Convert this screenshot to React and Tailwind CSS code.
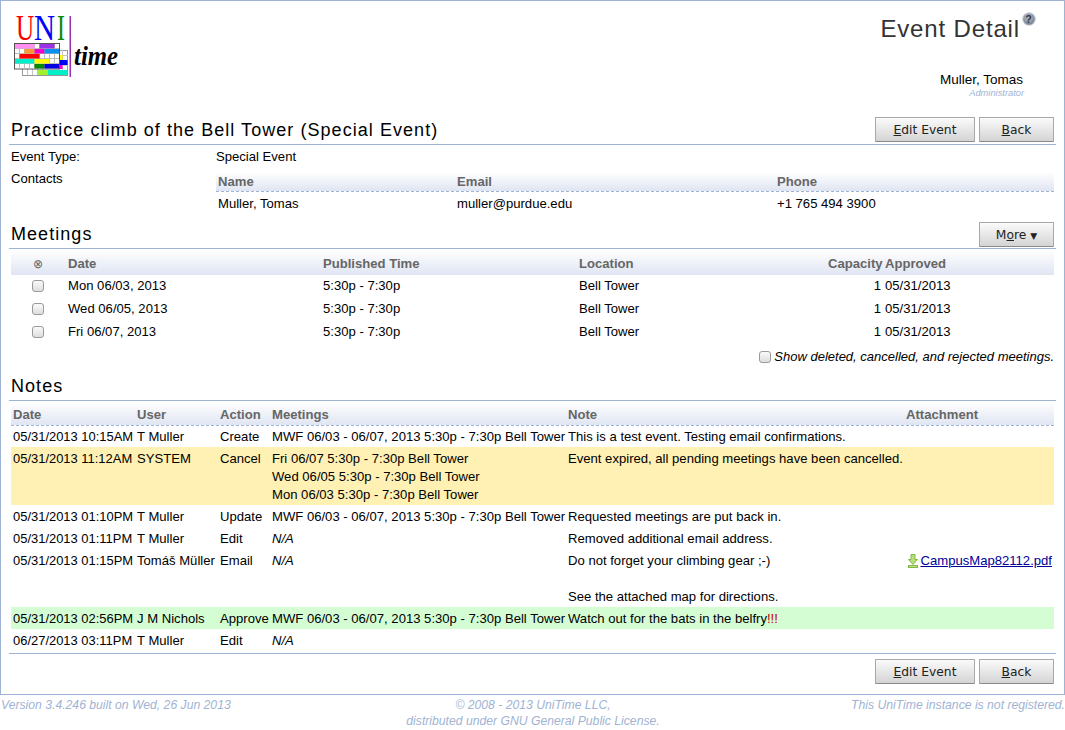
const meetings = [
  { date: 'Mon 06/03, 2013' },
  { date: 'Wed 06/05, 2013' },
  { date: 'Fri 06/07, 2013' },
];

const mwf = 'MWF 06/03 - 06/07, 2013 5:30p - 7:30p Bell Tower';

const notes = [
  { date: '05/31/2013 10:15AM', user: 'T Muller', action: 'Create', meetings: [mwf], note: ['This is a test event. Testing email confirmations.'], h: 'h-[21px] pt-[2px]' },
  {
    date: '05/31/2013 11:12AM', user: 'SYSTEM', action: 'Cancel',
    meetings: ['Fri 06/07 5:30p - 7:30p Bell Tower', 'Wed 06/05 5:30p - 7:30p Bell Tower', 'Mon 06/03 5:30p - 7:30p Bell Tower'],
    note: ['Event expired, all pending meetings have been cancelled.'], bg: 'bg-[#fff0b4]', h: 'h-[58px] pt-[3px]',
  },
  { date: '05/31/2013 01:10PM', user: 'T Muller', action: 'Update', meetings: [mwf], note: ['Requested meetings are put back in.'], h: 'h-[22px] pt-[3px]' },
  { date: '05/31/2013 01:11PM', user: 'T Muller', action: 'Edit', na: true, note: ['Removed additional email address.'], h: 'h-[22px] pt-[3px]' },
  {
    date: '05/31/2013 01:15PM', user: 'Tomáš Müller', action: 'Email', na: true,
    note: ['Do not forget your climbing gear ;-)', '\u00a0', 'See the attached map for directions.'], file: true, h: 'h-[58px] pt-[3px]',
  },
  { date: '05/31/2013 02:56PM', user: 'J M Nichols', action: 'Approve', meetings: [mwf], note: [<>Watch out for the bats in the belfry<span className="text-[#c00000]">!!!</span></>], bg: 'bg-[#d4fdd4]', h: 'h-[22px] pt-[3px]' },
  { date: '06/27/2013 03:11PM', user: 'T Muller', action: 'Edit', na: true, note: [''], h: 'h-[22px] pt-[3px]' },
];

function Btn({ children, w }) {
  return (
    <button className={`${w} h-[25px] pt-[2px] border border-[#a8a8a8] border-b-[#8a8a8a] rounded-[1px] bg-linear-to-b from-[#fbfbfb] to-[#d4d4d4] text-[12.3px] text-[#222] font-['DejaVu_Sans',sans-serif]`}>
      {children}
    </button>
  );
}

function EventButtons() {
  return (
    <div className="flex gap-[4px]">
      <Btn w="w-[100px]"><u>E</u>dit Event</Btn>
      <Btn w="w-[75px]"><u>B</u>ack</Btn>
    </div>
  );
}

function Check() {
  return (
    <input
      type="checkbox"
      className="appearance-none block w-[12px] h-[12px] rounded-[3px] border border-[#9a9a9a] bg-linear-to-b from-[#fafafa] to-[#dedede]"
    />
  );
}

function Logo() {
  return (
    <svg width="110" height="74" viewBox="0 -10 110 74" className="ml-[5px]">
      <text transform="translate(2 24) scale(0.72 1)" fontFamily="Liberation Serif" fontSize="35" fill="#ff0000">U</text>
      <text transform="translate(20 24) scale(0.83 1)" fontFamily="Liberation Serif" fontSize="35" fill="#0000ff">N</text>
      <text transform="translate(43 24) scale(0.68 1)" fontFamily="Liberation Serif" fontSize="35" fill="#0a8a0a">I</text>
      <rect x="55.5" y="0" width="1.5" height="61" fill="#9a30b0" />

      <rect x="8.5" y="34.5" width="45" height="25" fill="#fff" stroke="#999" />
      <path d="M13.5 53v6M18.5 53v6M23.5 53v6M28.5 53v6M48.5 34v20M46 39.5h8M46 44.5h8M46 49.5h8" stroke="#c4c4c4" strokeWidth="1" />

      <rect x="0.5" y="27.5" width="45" height="25.5" fill="#fff" stroke="#555" />
      <path d="M5.5 28v25M10.5 28v25M15.5 28v25M20.5 28v25M25.5 28v25M30.5 28v25M35.5 28v25M40.5 28v25M1 32.5h44M1 37.5h44M1 42.5h44M1 47.5h44" stroke="#bbb" strokeWidth="1" />

      <rect x="1" y="28" width="19.5" height="4.5" fill="#ff90f0" />
      <rect x="25.5" y="28" width="15" height="4.5" fill="#9b30e8" />
      <rect x="10.5" y="33" width="10" height="4.5" fill="#ff9a30" />
      <rect x="20.5" y="33" width="10" height="4.5" fill="#f000c8" />
      <rect x="30.5" y="33" width="14.5" height="4.5" fill="#0a90f0" />
      <rect x="5.5" y="38" width="20" height="4.5" fill="#ff0000" />
      <rect x="1" y="43" width="19.5" height="4.5" fill="#00eec8" />
      <rect x="20.5" y="43" width="15" height="4.5" fill="#ffff00" />
      <rect x="20.5" y="48" width="10" height="4.5" fill="#008a00" />
      <rect x="30.5" y="48" width="14.5" height="4.5" fill="#0000e0" />
      <rect x="46" y="39" width="2.5" height="5" fill="#ffff00" />
      <rect x="46" y="44" width="7.5" height="5" fill="#0000f0" />
      <rect x="46" y="49" width="2.5" height="4" fill="#f000c8" />
      <rect x="23.5" y="54" width="10" height="5" fill="#a0f030" />
      <rect x="33.5" y="54" width="20" height="5" fill="#00eec8" />

      <text x="60" y="49" fontFamily="Liberation Serif" fontSize="27" fontStyle="italic" fontWeight="bold" fill="#000" textLength="44" lengthAdjust="spacingAndGlyphs">time</text>
    </svg>
  );
}

function HelpIcon() {
  return (
    <svg width="14" height="14" viewBox="0 0 14 14" className="absolute right-[-16px] top-[-3px]">
      <defs>
        <radialGradient id="helpBall" cx="45%" cy="35%" r="70%">
          <stop offset="0%" stopColor="#b4bcc8" />
          <stop offset="100%" stopColor="#6f7a8a" />
        </radialGradient>
      </defs>
      <circle cx="7" cy="7" r="6.3" fill="url(#helpBall)" stroke="#d0d4da" />
      <text x="7" y="10.5" textAnchor="middle" fontSize="10" fontWeight="bold" fontFamily="Liberation Sans" fill="#2a2f38">?</text>
    </svg>
  );
}

function FileIcon() {
  return (
    <svg width="10" height="14" viewBox="0 0 10 14" className="mt-[2px]">
      <path d="M3 .5h4v5h2.5L5 10.5.5 5.5H3z" fill="#b5e07a" stroke="#86b44a" />
      <rect x="0.5" y="11.5" width="9" height="2" fill="#b5e07a" stroke="#86b44a" />
    </svg>
  );
}

export default function App() {
  return (
    <div className="w-[1065px] h-[730px] bg-white text-black text-[13.1px] font-['Liberation_Sans',Arial,sans-serif]">
      <div className="h-[695px] border border-[#9fb3d4] px-[8px] flex flex-col">
        <div className="h-[116px] flex justify-between">
          <div className="pt-[5px]"><Logo /></div>
          <div className="flex flex-col items-end pr-[36px] pt-[14px]">
            <div className="relative text-[24px] leading-[28px] tracking-[0.85px] text-[#333]">
              Event Detail
              <HelpIcon />
            </div>
            <div className="mt-[29px] mr-[-3px] leading-[15px] text-[13.5px]">Muller, Tomas</div>
            <div className="mt-[1px] mr-[-4px] text-[9.3px] leading-[11px] italic text-[#9fb3d4]">Administrator</div>
          </div>
        </div>

        <div className="h-[28px] pb-[2px] px-[2px] border-b border-[#9fb3d4] flex items-center justify-between">
          <div className="text-[18px] tracking-[1.05px] leading-[24px] pt-[1px]">Practice climb of the Bell Tower (Special Event)</div>
          <EventButtons />
        </div>
        <div className="h-[22px] mx-[2px] pt-[1px] flex items-center">
          <div className="w-[205px]">Event Type:</div>
          <div>Special Event</div>
        </div>
        <div className="flex h-[53px] mx-[2px]">
          <div className="w-[205px] pt-[2px]">Contacts</div>
          <div className="flex-1 pt-[5px]">
            <div className="h-[20px] flex items-center pl-[2px] font-bold text-[#666] border-b border-dashed border-[#9fb3d4] bg-linear-to-b from-white to-[#dfe5f2]">
              <div className="w-[239px]">Name</div>
              <div className="w-[320px]">Email</div>
              <div>Phone</div>
            </div>
            <div className="h-[24px] flex items-center pl-[2px]">
              <div className="w-[239px]">Muller, Tomas</div>
              <div className="w-[320px]">muller@purdue.edu</div>
              <div>+1 765 494 3900</div>
            </div>
          </div>
        </div>

        <div className="h-[29px] px-[2px] border-b border-[#9fb3d4] flex items-center justify-between">
          <div className="text-[18px] tracking-[1.05px]">Meetings</div>
          <Btn w="w-[75px]">M<u>o</u>re <span className="text-[9px]">▼</span></Btn>
        </div>
        <div className="h-[25px] mx-[2px] pt-[2px] flex items-center font-bold text-[#666] bg-linear-to-b from-white to-[#dfe5f2] mt-[1px]">
          <div className="w-[57px] pl-[22px] text-[12px] font-normal">⊗</div>
          <div className="w-[255px]">Date</div>
          <div className="w-[256px]">Published Time</div>
          <div className="w-[249px]">Location</div>
          <div className="w-[57px]">Capacity</div>
          <div>Approved</div>
        </div>
        {meetings.map((m) => (
          <div key={m.date} className="h-[23px] pb-[2px] mx-[2px] flex items-center">
            <div className="w-[57px] pl-[21px]"><Check /></div>
            <div className="w-[255px]">{m.date}</div>
            <div className="w-[256px]">5:30p - 7:30p</div>
            <div className="w-[249px]">Bell Tower</div>
            <div className="w-[53px] text-right">1</div>
            <div className="pl-[4px]">05/31/2013</div>
          </div>
        ))}
        <div className="h-[27px] pb-[2px] mx-[2px] flex items-center justify-end gap-[3px] italic text-[13px]">
          <Check />
          <span>Show deleted, cancelled, and rejected meetings.</span>
        </div>

        <div className="h-[30px] px-[2px] border-b border-[#9fb3d4] flex items-end pb-[2px]">
          <div className="text-[18px] tracking-[1.05px] leading-[24px]">Notes</div>
        </div>
        <div className="h-[24px] mx-[2px] pt-[2px] flex items-center pl-[2px] font-bold text-[#666] border-b border-dashed border-[#9fb3d4] bg-linear-to-b from-white to-[#dfe5f2] mt-[1px]">
          <div className="w-[124px]">Date</div>
          <div className="w-[83px]">User</div>
          <div className="w-[52px]">Action</div>
          <div className="w-[296px]">Meetings</div>
          <div className="w-[338px]">Note</div>
          <div>Attachment</div>
        </div>
        {notes.map((n) => (
          <div key={n.date} className={`${n.h} ${n.bg || ''} mx-[2px] flex pl-[2px] leading-[18px]`}>
            <div className="w-[124px] whitespace-nowrap text-[12.95px]">{n.date}</div>
            <div className="w-[83px] whitespace-nowrap">{n.user}</div>
            <div className="w-[52px]">{n.action}</div>
            <div className="w-[296px] whitespace-nowrap">
              {n.na ? <i>N/A</i> : n.meetings.map((l) => <div key={l}>{l}</div>)}
            </div>
            <div className="w-[338px] whitespace-nowrap">
              {n.note.map((l, i) => <div key={i}>{l}</div>)}
            </div>
            {n.file && (
              <div className="flex-1 flex justify-end items-start gap-[2px] pr-[2px]">
                <FileIcon />
                <a href="#" className="text-[#000099] underline">CampusMap82112.pdf</a>
              </div>
            )}
          </div>
        ))}
        <div className="mt-[2px] pt-[5px] px-[2px] border-t border-[#9fb3d4] flex justify-end">
          <EventButtons />
        </div>
      </div>
      <div className="flex justify-between pl-[1px] pt-[2px] text-[12.2px] leading-[16px] italic text-[#9fb3d4]">
        <div className="w-[355px]">Version 3.4.246 built on Wed, 26 Jun 2013</div>
        <div className="text-center">© 2008 - 2013 UniTime LLC,<br />distributed under GNU General Public License.</div>
        <div className="w-[355px] text-right">This UniTime instance is not registered.</div>
      </div>
    </div>
  );
}
